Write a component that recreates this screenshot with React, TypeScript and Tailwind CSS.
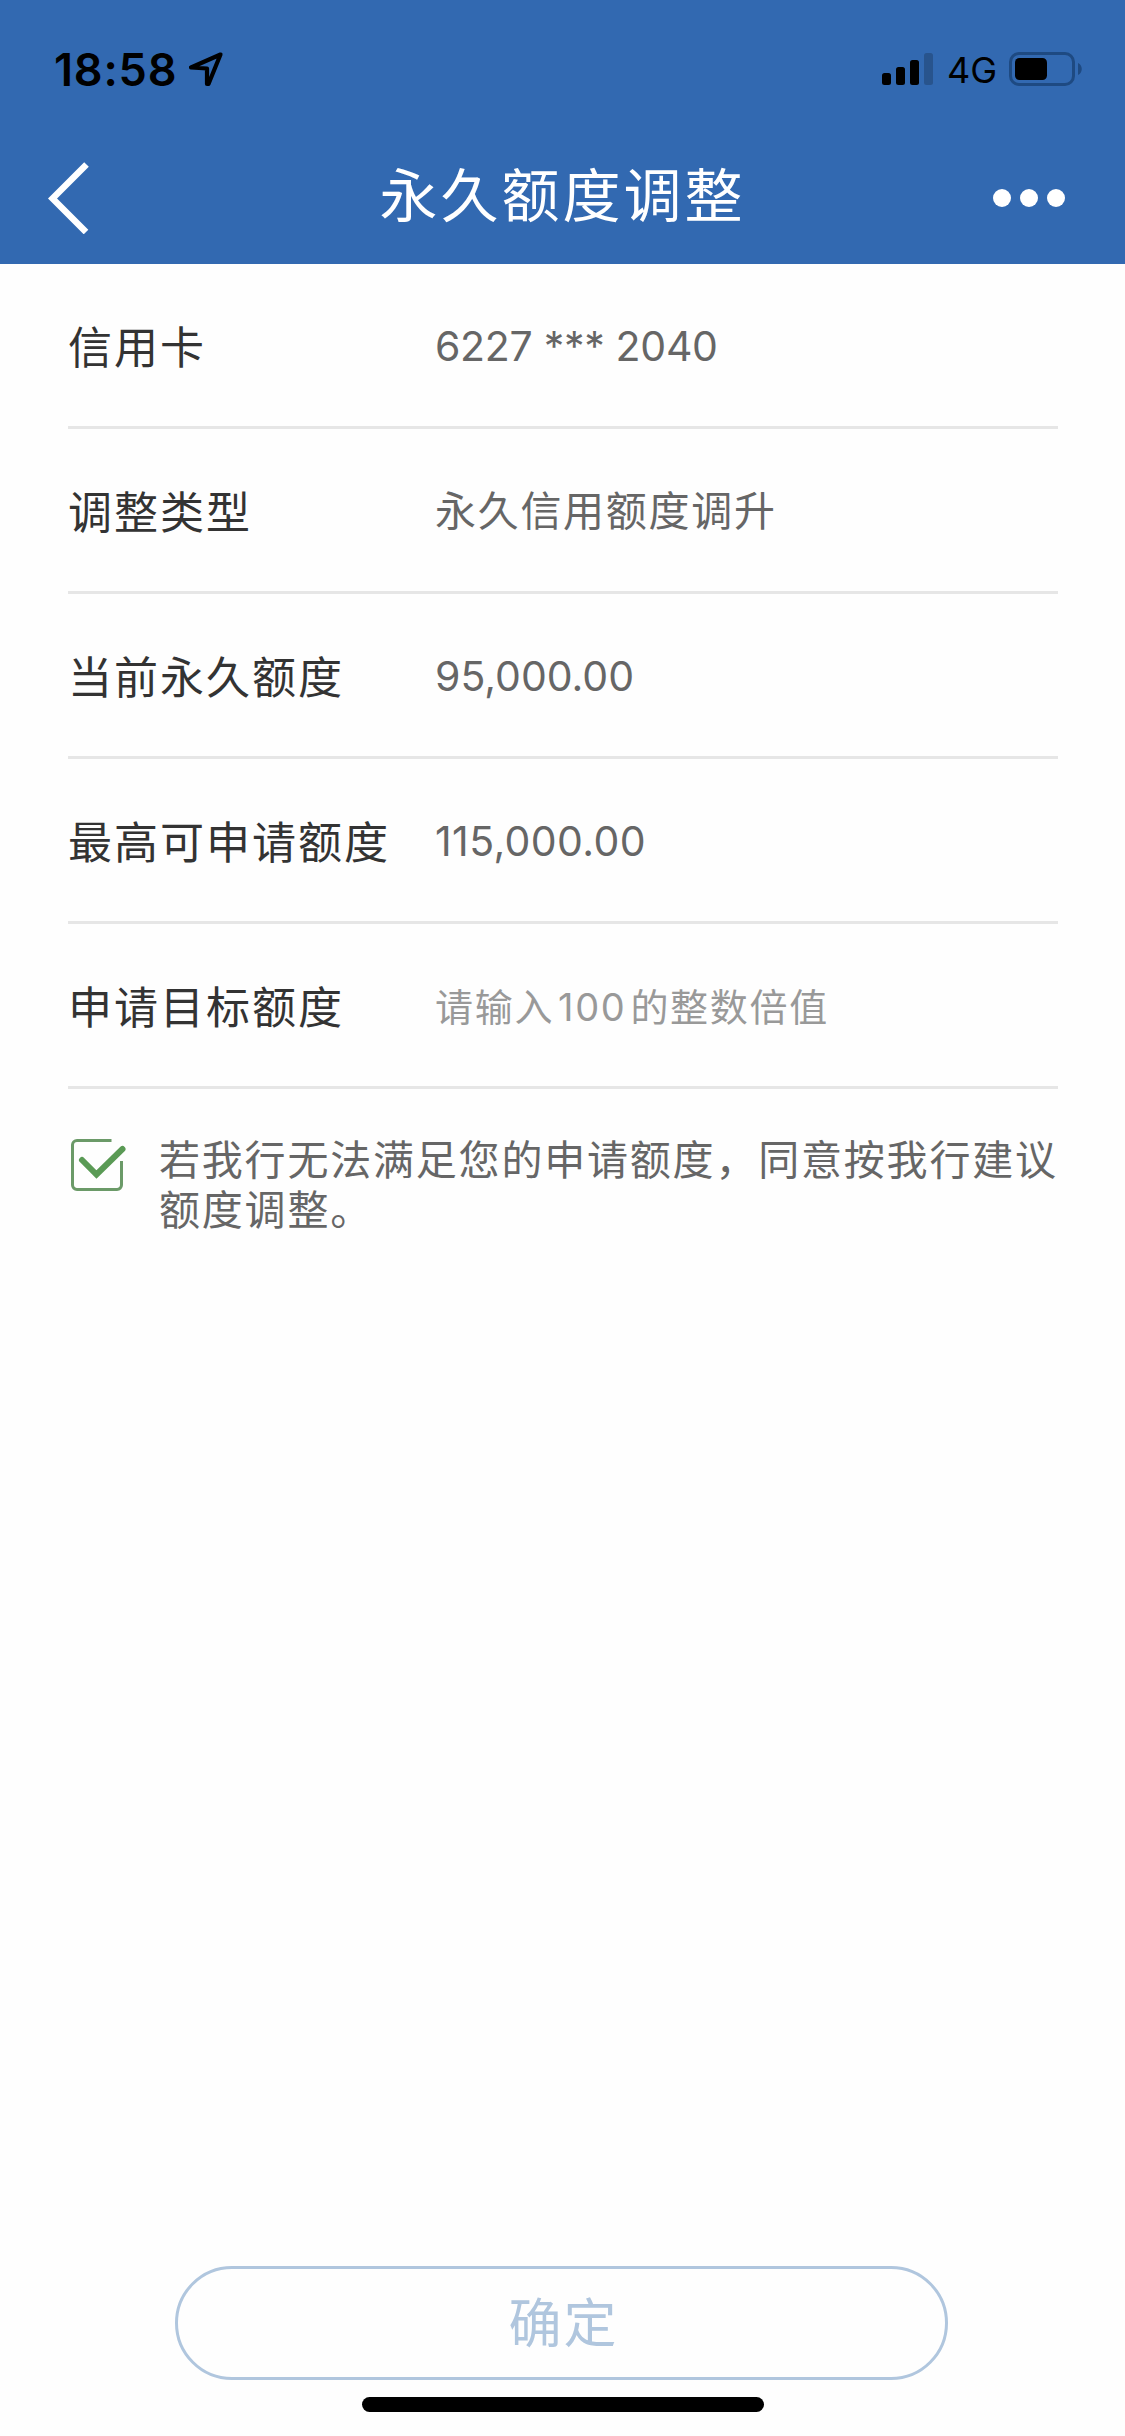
import React, { useState } from "react";

const details = [
  { label: "信用卡", value: "6227 *** 2040", tracking: "tracking-[-0.3px]" },
  { label: "调整类型", value: "永久信用额度调升", tracking: "tracking-[1.7px]" },
  { label: "当前永久额度", value: "95,000.00", tracking: "tracking-normal" },
  { label: "最高可申请额度", value: "115,000.00", tracking: "tracking-[0.4px]" },
];

function StatusBar() {
  return (
    <div className="flex h-[138px] items-center justify-between pl-[54px] pr-[42px] text-black">
      <div className="flex items-center gap-[11px]">
        <span className="w-[123px] text-[45px] leading-none font-semibold tracking-[0.8px]">18:58</span>
        <svg className="h-9 w-9" viewBox="0 0 36 36" fill="none">
          <path
            d="M32.5 3.5 3 16.5l16 1V33h1.5L32.5 3.5Z"
            stroke="currentColor"
            strokeWidth="4.2"
            strokeLinejoin="round"
          />
        </svg>
      </div>
      <div className="flex items-center">
        <svg className="h-8 w-[51px]" viewBox="0 0 51 32" fill="currentColor">
          <rect x="0" y="20" width="9" height="12" rx="2.5" />
          <rect x="14" y="14" width="9" height="18" rx="2.5" />
          <rect x="28" y="7" width="9" height="25" rx="2.5" />
          <rect x="42" y="0" width="9" height="32" rx="2.5" opacity="0.2" />
        </svg>
        <span className="ml-[14px] w-[50px] pt-0.5 text-[36px] leading-none">4G</span>
        <svg className="ml-[12px] h-[34px] w-[74px]" viewBox="0 0 74 34">
          <rect x="1.5" y="1.5" width="63" height="31" rx="8.5" fill="none" stroke="#1e4a82" strokeWidth="3" />
          <rect x="6" y="6" width="32" height="22" rx="4.5" fill="black" />
          <path d="M69 11c5 2 5 10 0 12Z" fill="#1e4a82" />
        </svg>
      </div>
    </div>
  );
}

function Header() {
  return (
    <header className="h-[264px] bg-[#3269b1]">
      <StatusBar />
      <div className="flex h-[120px] items-center justify-between pl-12 pr-[60px] text-white">
        <button aria-label="返回" className="w-[102px]">
          <svg className="h-[72px] w-[42px]" viewBox="0 0 42 72" fill="none">
            <path d="M38.5 2.5 4.500 36.500l33.500 33.500" stroke="currentColor" strokeWidth="6.5" />
          </svg>
        </button>
        <h1 className="pb-[5px] text-[58px] leading-none tracking-[3px]">永久额度调整</h1>
        <button aria-label="更多" className="flex w-[90px] justify-end gap-[9px]">
          <span className="size-[18px] rounded-full bg-white" />
          <span className="size-[18px] rounded-full bg-white" />
          <span className="size-[18px] rounded-full bg-white" />
        </button>
      </div>
    </header>
  );
}

function Row({ label, children }: { label: string; children: React.ReactNode }) {
  return (
    <div className="flex h-[165px] items-center border-b-3 border-[#e6e6e6]">
      <span className="w-[367px] whitespace-nowrap pt-[5px] text-[44px] leading-none tracking-[2px] text-[#333]">
        {label}
      </span>
      <div className="flex-1 pt-[3px] text-[#666]">{children}</div>
    </div>
  );
}

export default function App() {
  const [amount, setAmount] = useState("");
  const [agreed, setAgreed] = useState(true);

  return (
    <div className="flex h-[2436px] w-[1125px] flex-col bg-[#fefefe] font-['Inter','Noto_Sans_CJK_SC',sans-serif]">
      <Header />

      <main className="flex-1 pl-[68px] pr-[67px]">
        {details.map((item) => (
          <Row key={item.label} label={item.label}>
            <span className={`block text-[41px] leading-none ${item.tracking}`}>{item.value}</span>
          </Row>
        ))}
        <Row label="申请目标额度">
          <input
            value={amount}
            onChange={(e) => setAmount(e.target.value)}
            placeholder="请输入 100 的整数倍值"
            className="block w-full text-[38px] leading-none tracking-[1.7px] [word-spacing:-8.5px] outline-none placeholder:text-[#999]"
          />
        </Row>

        {/* Consent */}
        <div className="flex pt-[46px]">
          <button aria-label="同意" onClick={() => setAgreed(!agreed)} className="h-[58px] w-[91px]">
            <svg className="h-[58px] w-[60px]" viewBox="0 0 60 58" fill="none">
              <path
                d="M43.5 5.5H9a4.5 4.5 0 0 0-4.5 4.5v40a4.5 4.5 0 0 0 4.5 4.5h40a4.5 4.5 0 0 0 4.5-4.5V26"
                stroke="#6b9a68"
                strokeWidth="3"
              />
              {agreed && (
                <path
                  d="m14 25 14.5 14.5L54.5 14"
                  stroke="#5a9a55"
                  strokeWidth="6"
                  strokeLinecap="round"
                />
              )}
            </svg>
          </button>
          <p className="flex-1 whitespace-nowrap text-[41px] leading-[50px] tracking-[1.8px] text-[#666]">
            若我行无法满足您的申请额度，同意按我行建议
            <br />
            额度调整。
          </p>
        </div>
      </main>

      <footer className="flex flex-col items-center">
        <button className="mr-[3px] h-[114px] w-[773px] rounded-full border-3 border-[#b0c6de] pt-[3px] pl-[5px] text-[53px] leading-none tracking-[2px] text-[#b0c6de]">
          确定
        </button>
        <div className="mt-[17px] mb-6 h-[15px] w-[402px] rounded-full bg-black" />
      </footer>
    </div>
  );
}
